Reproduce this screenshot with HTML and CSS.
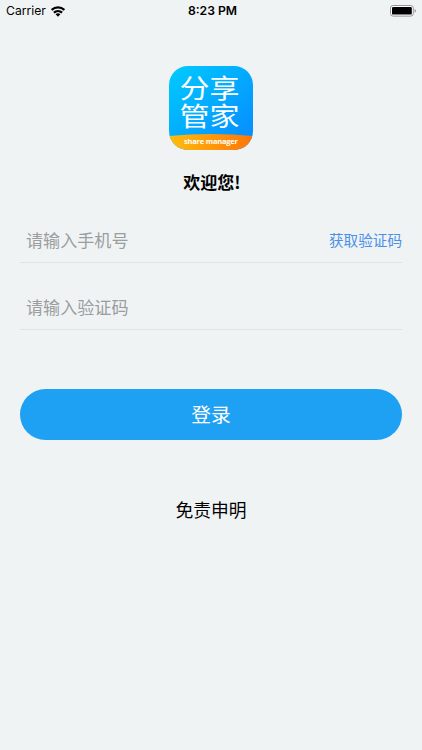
FILE: index.html
```html
<!DOCTYPE html>
<html lang="zh-CN">
<head>
<meta charset="utf-8">
<meta name="viewport" content="width=device-width, initial-scale=1">
<title>分享管家</title>
<link rel="stylesheet" href="styles.css">
</head>
<body>
<header class="status">
  <div class="carrier">
    <span>Carrier</span>
    <svg class="wifi" width="14" height="11" viewBox="0 0 14 11" fill="none" stroke="#000" stroke-width="2.2">
      <path d="M.6 4C4.2.6 9.8.6 13.4 4"/>
      <path d="M2.9 6.6C5.2 4.5 8.8 4.5 11.1 6.6"/>
      <path d="M4.6 8.3C6 7 8 7 9.4 8.3L7 10.7Z" fill="#000" stroke="none"/>
    </svg>
  </div>
  <div class="time">8:23 PM</div>
  <svg class="battery" width="27" height="12" viewBox="0 0 27 12">
    <rect x=".5" y=".5" width="22.8" height="10.6" rx="2.6" fill="#fff" stroke="#929496"/>
    <rect x="2" y="2" width="19.8" height="7.6" rx="1.2"/>
    <path d="M24.6 3.9C26.4 4.5 26.4 7.1 24.6 7.7Z" fill="#929496"/>
  </svg>
</header>
<main class="login">
  <svg class="logo" width="84" height="84" viewBox="0 0 84 84">
    <defs>
      <linearGradient id="sky" x1="0" y1="0" x2="1" y2="1">
        <stop offset="0" stop-color="#00cbff"/>
        <stop offset="1" stop-color="#0788ff"/>
      </linearGradient>
      <linearGradient id="sun" x1="0" y1="0" x2="1" y2="0">
        <stop offset="0" stop-color="#ffbd0c"/>
        <stop offset="1" stop-color="#ff7506"/>
      </linearGradient>
      <clipPath id="tile"><rect width="84" height="84" rx="19"/></clipPath>
    </defs>
    <g clip-path="url(#tile)">
      <rect width="84" height="84" fill="url(#sky)"/>
      <path d="M0 70Q42 66 84 70V84H0Z" fill="url(#sun)"/>
    </g>
    <text class="logo-name" transform="translate(10.5 32) scale(1 .88)">分享</text>
    <text class="logo-name" transform="translate(10.5 60.3) scale(1 .88)">管家</text>
    <text class="logo-sub" x="42" y="77.5" text-anchor="middle" textLength="54">share manager</text>
  </svg>
  <h1 class="welcome">欢迎您!</h1>
  <div class="field phone">
    <span class="placeholder">请输入手机号</span>
    <a class="code">获取验证码</a>
  </div>
  <div class="field verify">
    <span class="placeholder">请输入验证码</span>
  </div>
  <button class="submit">登录</button>
  <a class="disclaimer">免责申明</a>
</main>
</body>
</html>
```
FILE: styles.css
```css
* {
  box-sizing: border-box;
}

body {
  margin: 0;
  height: 750px;
  overflow: hidden;
  background: #eff3f4;
  color: #000;
  font-family: "Noto Sans CJK SC", sans-serif;
}

.status {
  display: grid;
  grid-template-columns: 1fr auto 1fr;
  align-items: center;
  height: 22px;
  padding: 0 5px 0 6px;
  font: 12.2px/20px Inter, sans-serif;
}

.carrier {
  display: flex;
  align-items: center;
  gap: 5px;
}

.time {
  padding-left: 2px;
  font-weight: 600;
}

.battery {
  justify-self: end;
}

.login {
  display: flex;
  flex-direction: column;
  padding: 43.5px 20px 0;
}

.logo {
  align-self: center;
  display: block;
}

.logo-name {
  font-size: 30px;
  fill: #fff;
}

.logo-sub {
  font: 700 7.5px "Open Sans", sans-serif;
  fill: #fff;
}

.welcome {
  margin: 18.5px 0 0;
  padding-left: 2px;
  font-size: 17px;
  line-height: 28px;
  font-weight: 700;
  text-align: center;
}

.field {
  display: flex;
  align-items: center;
  justify-content: space-between;
  border-bottom: 1px solid #e0e4e5;
  padding-left: 6px;
}

.phone {
  height: 46px;
  margin-top: 21px;
}

.verify {
  height: 46px;
  margin-top: 21px;
}

.placeholder {
  font-size: 17.1px;
  color: #9b9d9e;
}

.code {
  font-size: 14.6px;
  color: #4a90e8;
}

.submit {
  height: 51px;
  margin-top: 59px;
  padding: 0 0 2px;
  border: 0;
  border-radius: 26px;
  background: #1fa1f3;
  color: #fff;
  font: 19.8px "Noto Sans CJK SC", sans-serif;
}

.disclaimer {
  margin-top: 55px;
  font-size: 17.8px;
  line-height: 28px;
  text-align: center;
}
```
